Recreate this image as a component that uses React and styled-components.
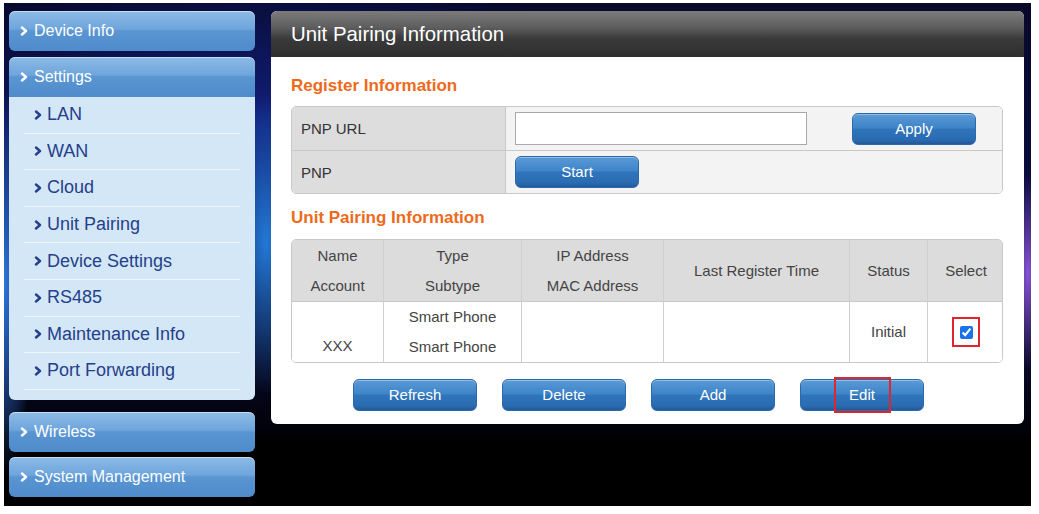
import React from "react";
import styled, { createGlobalStyle } from "styled-components";

const Global = createGlobalStyle`
  html, body { margin: 0; padding: 0; background: #fff; }
  body { font-family: "Liberation Sans", Arial, sans-serif; }
  * { box-sizing: border-box; }
`;

const Page = styled.div`
  width: 1039px;
  height: 514px;
  padding: 3px 8px 8px 4px;
`;

const Frame = styled.div`
  width: 1027px;
  height: 503px;
  padding: 8px 0 0 5px;
  display: flex;
  gap: 16px;
  align-items: flex-start;
  background:
    radial-gradient(ellipse 30px 140px at 1024px 270px, rgba(150, 90, 230, 0.9), transparent 70%),
    radial-gradient(ellipse 60px 200px at 262px 240px, rgba(40, 140, 240, 0.85), transparent 75%),
    radial-gradient(ellipse 40px 260px at 0px 280px, rgba(50, 130, 240, 0.9), transparent 75%),
    radial-gradient(ellipse 500px 200px at 250px 120px, rgba(20, 40, 150, 0.7), transparent 80%),
    linear-gradient(180deg, #07082a 0%, #0a0c40 40%, #060720 75%, #000 88%, #000 100%);
`;

const Sidebar = styled.nav`
  width: 246px;
  display: flex;
  flex-direction: column;
`;

const MenuHeader = styled.div`
  height: 40px;
  margin-top: ${(p) => p.$mt || 0}px;
  display: flex;
  align-items: center;
  gap: 6px;
  padding-left: 11px;
  color: #fff;
  font-size: 16px;
  border-radius: ${(p) => (p.$open ? "6px 6px 0 0" : "6px")};
  background: linear-gradient(
    180deg,
    #8dbbe6 0%,
    #6ea5dc 45%,
    #5a95d2 50%,
    #4f8bcb 100%
  );
  box-shadow: inset 0 1px 0 rgba(255, 255, 255, 0.5);
`;

const SubMenu = styled.div`
  background: #d4e7f6;
  border-radius: 0 0 6px 6px;
  padding: 0 15px 10px 15px;
  display: flex;
  flex-direction: column;
`;

const SubItem = styled.div`
  height: 36.6px;
  display: flex;
  align-items: center;
  gap: 5px;
  padding-left: 10px;
  color: #24408c;
  font-size: 18px;
  border-bottom: 1px solid #eef6fc;
`;

const Chevron = ({ color, size = 8 }) => (
  <svg width={size} height={size + 2} viewBox="0 0 8 10">
    <polyline
      points="2,1.5 6,5 2,8.5"
      fill="none"
      stroke={color}
      strokeWidth="2.4"
      strokeLinecap="round"
      strokeLinejoin="round"
    />
  </svg>
);

const Panel = styled.section`
  width: 753px;
  height: 413px;
  background: #fff;
  border-radius: 6px;
  overflow: hidden;
`;

const PanelHeader = styled.div`
  height: 46px;
  display: flex;
  align-items: center;
  padding-left: 20px;
  color: #fff;
  font-size: 20.4px;
  background: linear-gradient(180deg, #7b7b7b 0%, #5e5e5e 35%, #3a3a3a 60%, #2e2e2e 100%);
`;

const PanelBody = styled.div`
  padding: 0 20px 0 20px;
`;

const SectionTitle = styled.h2`
  margin: 0;
  height: ${(p) => p.$h}px;
  padding-top: ${(p) => p.$pt}px;
  display: flex;
  align-items: center;
  color: #ee6a1b;
  font-size: 17px;
  font-weight: bold;
`;

const RegTable = styled.div`
  width: 712px;
  display: grid;
  grid-template-columns: 214px 1fr;
  grid-auto-rows: 43px;
  border: 1px solid #c8c8c8;
  border-radius: 5px;
  overflow: hidden;
`;

const RegLabel = styled.div`
  background: #dddddd;
  display: flex;
  align-items: center;
  padding-left: 9px;
  font-size: 15px;
  color: #333;
  border-right: 1px solid #c8c8c8;
  border-top: ${(p) => (p.$first ? "none" : "1px solid #c8c8c8")};
`;

const RegValue = styled.div`
  background: #f3f3f3;
  display: flex;
  align-items: center;
  padding-left: 9px;
  gap: 45px;
  border-top: ${(p) => (p.$first ? "none" : "1px solid #c8c8c8")};
`;

const TextInput = styled.input`
  width: 292px;
  height: 33px;
  border: 1px solid #a9a9a9;
  background: #fff;
  margin: 0;
`;

const BlueButton = styled.button`
  position: relative;
  width: 124px;
  height: 32px;
  margin: 0;
  padding: 0 0 1px 0;
  border: 1px solid #2a69ad;
  border-radius: 6px;
  color: #fff;
  font-family: "Liberation Sans", Arial, sans-serif;
  font-size: 15px;
  background: linear-gradient(
    180deg,
    #5a9ad6 0%,
    #3f85c9 45%,
    #2f74bb 52%,
    #2a6cb2 85%,
    #22599a 100%
  );
  box-shadow: inset 0 1px 0 rgba(255, 255, 255, 0.35);
`;

const PairTable = styled.div`
  width: 712px;
  display: grid;
  grid-template-columns: 92px 138px 142px 186px 78px 76px;
  grid-template-rows: 61px 61px;
  border: 1px solid #c8c8c8;
  border-radius: 5px;
  overflow: hidden;
`;

const Cell = styled.div`
  display: flex;
  flex-direction: column;
  align-items: center;
  justify-content: ${(p) => (p.$end ? "flex-end" : "center")};
  padding-bottom: ${(p) => (p.$end ? "1px" : "0")};
  line-height: 30px;
  font-size: 15px;
  color: #444;
  background: ${(p) => (p.$head ? "#dcdcdc" : "#fff")};
  border-right: ${(p) => (p.$last ? "none" : "1px solid #cfcfcf")};
  border-top: ${(p) => (p.$head ? "none" : "1px solid #c8c8c8")};
`;

const Highlight = styled.span`
  position: relative;
  width: 28px;
  height: 30px;
  border: 2px solid #e0262b;
  display: flex;
  align-items: center;
  justify-content: center;
`;

const Check = styled.input`
  margin: 0;
  width: 13px;
  height: 13px;
  accent-color: #1a73e8;
`;

const ButtonRow = styled.div`
  display: flex;
  gap: 25px;
  padding: 16px 0 0 62px;
`;

const EditMark = styled.span`
  position: absolute;
  left: 33px;
  top: -3px;
  width: 57px;
  height: 36px;
  border: 2px solid #e0262b;
`;

const menuTop = ["LAN", "WAN", "Cloud", "Unit Pairing", "Device Settings", "RS485", "Maintenance Info", "Port Forwarding"];

export default function App() {
  return (
    <>
      <Global />
      <Page>
        <Frame>
          <Sidebar>
            <MenuHeader>
              <Chevron color="#fff" />
              Device Info
            </MenuHeader>
            <MenuHeader $mt={6} $open>
              <Chevron color="#fff" />
              Settings
            </MenuHeader>
            <SubMenu>
              {menuTop.map((m) => (
                <SubItem key={m}>
                  <Chevron color="#24408c" />
                  {m}
                </SubItem>
              ))}
            </SubMenu>
            <MenuHeader $mt={12}>
              <Chevron color="#fff" />
              Wireless
            </MenuHeader>
            <MenuHeader $mt={5}>
              <Chevron color="#fff" />
              System Management
            </MenuHeader>
          </Sidebar>
          <Panel>
            <PanelHeader>Unit Pairing Information</PanelHeader>
            <PanelBody>
              <SectionTitle $h={49} $pt={8}>Register Information</SectionTitle>
              <RegTable>
                <RegLabel $first>PNP URL</RegLabel>
                <RegValue $first>
                  <TextInput type="text" />
                  <BlueButton>Apply</BlueButton>
                </RegValue>
                <RegLabel>PNP</RegLabel>
                <RegValue>
                  <BlueButton>Start</BlueButton>
                </RegValue>
              </RegTable>
              <SectionTitle $h={45} $pt={3}>Unit Pairing Information</SectionTitle>
              <PairTable>
                <Cell $head><span>Name</span><span>Account</span></Cell>
                <Cell $head><span>Type</span><span>Subtype</span></Cell>
                <Cell $head><span>IP Address</span><span>MAC Address</span></Cell>
                <Cell $head>Last Register Time</Cell>
                <Cell $head>Status</Cell>
                <Cell $head $last>Select</Cell>
                <Cell $end><span>XXX</span></Cell>
                <Cell><span>Smart Phone</span><span>Smart Phone</span></Cell>
                <Cell />
                <Cell />
                <Cell>Initial</Cell>
                <Cell $last>
                  <Highlight>
                    <Check type="checkbox" defaultChecked />
                  </Highlight>
                </Cell>
              </PairTable>
              <ButtonRow>
                <BlueButton>Refresh</BlueButton>
                <BlueButton>Delete</BlueButton>
                <BlueButton>Add</BlueButton>
                <BlueButton>
                  Edit
                  <EditMark />
                </BlueButton>
              </ButtonRow>
            </PanelBody>
          </Panel>
        </Frame>
      </Page>
    </>
  );
}
